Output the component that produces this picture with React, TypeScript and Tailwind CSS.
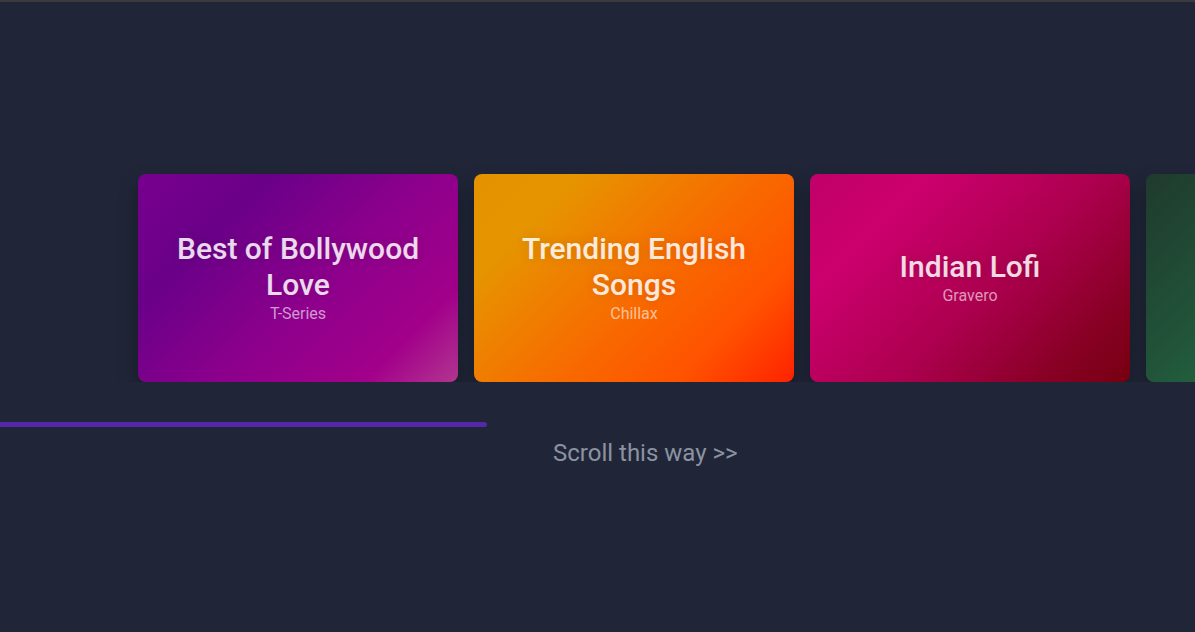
import React from "react";

interface Playlist {
  title: string;
  artist: string;
  bg: string;
}

const playlists: Playlist[] = [
  {
    title: "Best of Bollywood Love",
    artist: "T-Series",
    bg: "bg-[linear-gradient(135deg,#78008f_0%,#6a0088_25%,#8c008c_55%,#a2008a_82%,#b23690_100%)]",
  },
  {
    title: "Trending English Songs",
    artist: "Chillax",
    bg: "bg-[linear-gradient(135deg,#e69200_0%,#e69400_20%,#f86a00_55%,#ff5200_78%,#ff2200_100%)]",
  },
  {
    title: "Indian Lofi",
    artist: "Gravero",
    bg: "bg-[linear-gradient(135deg,#c00068_0%,#cc006e_22%,#ad0050_55%,#8a0026_82%,#760010_100%)]",
  },
  {
    // only a sliver of this one is on screen
    title: "",
    artist: "",
    bg: "bg-[linear-gradient(135deg,#1f3a2d_0%,#21563a_40%,#218048_80%,#22904f_100%)]",
  },
];

const Card = ({ p }: { p: Playlist }) => (
  <div
    className={`${p.bg} w-[320px] h-[208px] shrink-0 rounded-lg shadow-[0_10px_20px_rgba(0,0,0,0.3)] flex flex-col items-center justify-center px-6 text-center`}
  >
    {p.title && (
      <h2 className="text-3xl leading-9 font-medium text-white/85 [text-shadow:0_0_12px_rgba(0,0,0,0.12)]">
        {p.title}
      </h2>
    )}
    {p.artist && <p className="text-base leading-[22px] text-white/60">{p.artist}</p>}
  </div>
);

export default function App() {
  return (
    <div
      className="w-full h-[632px] bg-[#202638] border-t-2 border-[#3b3b3d] overflow-hidden"
      style={{ fontFamily: "Roboto, 'Noto Sans', sans-serif" }}
    >
      <div className="pt-[172px] flex gap-4 pl-[138px] overflow-hidden">
        {playlists.map((p, i) => (
          <Card key={i} p={p} />
        ))}
      </div>
      <div className="mt-10 h-[5px] w-[487px] bg-[#5428a6] rounded-r-full" />
      <p className="mt-[10px] pl-[553px] text-2xl leading-8 text-[#8b93a1]">
        Scroll this way &gt;&gt;
      </p>
    </div>
  );
}
